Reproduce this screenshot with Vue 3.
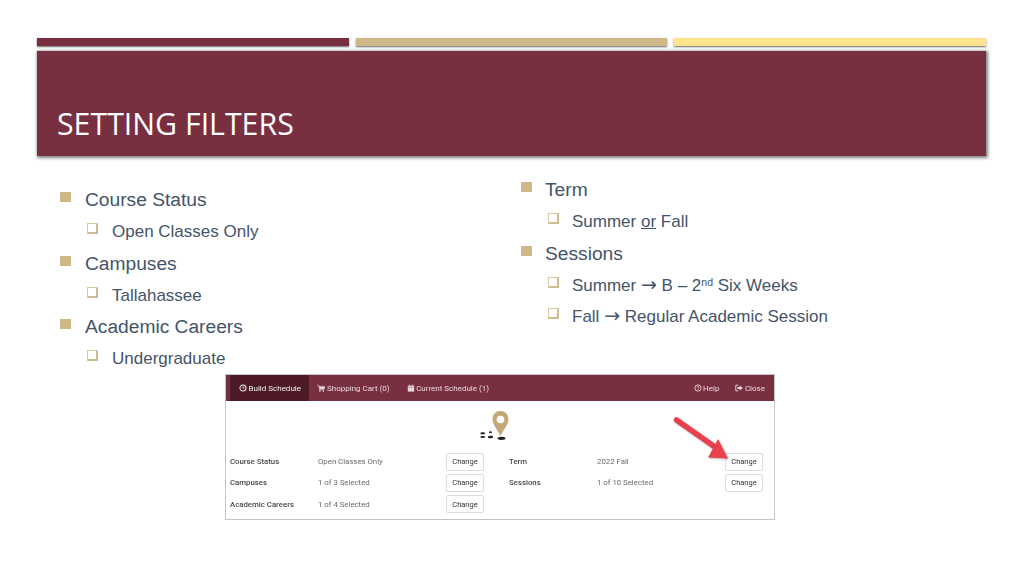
<script setup>
const left = [
  { head: 'Course Status', subs: ['Open Classes Only'] },
  { head: 'Campuses', subs: ['Tallahassee'] },
  { head: 'Academic Careers', subs: ['Undergraduate'] },
]
const rowsLeft = [
  ['Course Status', 'Open Classes Only'],
  ['Campuses', '1 of 3 Selected'],
  ['Academic Careers', '1 of 4 Selected'],
]
const rowsRight = [
  ['Term', '2022 Fall'],
  ['Sessions', '1 of 10 Selected'],
]
</script>

<template>
  <div class="slide">
    <div class="bars">
      <div class="bar maroon"></div>
      <div class="bar tan"></div>
      <div class="bar yellow"></div>
    </div>
    <header class="title"><h1>SETTING FILTERS</h1></header>

    <div class="columns">
      <div class="col col-left">
        <template v-for="g in left" :key="g.head">
          <div class="l1"><span class="sq"></span>{{ g.head }}</div>
          <div class="l2" v-for="s in g.subs" :key="s"><span class="box"></span>{{ s }}</div>
        </template>
      </div>
      <div class="col col-right">
        <div class="l1"><span class="sq"></span>Term</div>
        <div class="l2"><span class="box"></span>Summer&nbsp;<u>or</u>&nbsp;Fall</div>
        <div class="l1"><span class="sq"></span>Sessions</div>
        <div class="l2"><span class="box"></span><span>Summer <span class="to">→</span> B – 2<sup>nd</sup> Six Weeks</span></div>
        <div class="l2"><span class="box"></span><span>Fall <span class="to">→</span> Regular Academic Session</span></div>
      </div>
    </div>

    <div class="shot">
      <nav class="nav">
        <div class="tab active">
          <svg viewBox="0 0 10 10" class="ic"><circle cx="5" cy="5" r="3.8" fill="none" stroke="currentColor" stroke-width="1.3"/><path d="M5 2.800V5.200H7" fill="none" stroke="currentColor" stroke-width="1"/></svg>
          Build Schedule
        </div>
        <div class="tab">
          <svg viewBox="0 0 10 10" class="ic"><path d="M0 1.500H2L2.500 3H10L9 6.500H3L2 1.500ZM3 7.200H8.500" fill="currentColor" stroke="currentColor" stroke-width=".5"/><circle cx="3.600" cy="8.600" r="1" fill="currentColor"/><circle cx="8" cy="8.600" r="1" fill="currentColor"/></svg>
          Shopping Cart (0)
        </div>
        <div class="tab">
          <svg viewBox="0 0 10 10" class="ic"><path d="M1 2H9V9.500H1Z" fill="currentColor"/><path d="M3 .8V2.600M7 .8V2.600" stroke="currentColor" stroke-width="1"/><path d="M1.500 4H8.500" stroke="#782f40" stroke-width=".5"/></svg>
          Current Schedule (1)
        </div>
        <div class="spacer"></div>
        <div class="tab side">
          <svg viewBox="0 0 10 10" class="ic"><circle cx="5" cy="5" r="3.900" fill="none" stroke="currentColor" stroke-width="1.100"/><path d="M3.700 4C3.800 2.700 6.300 2.700 6.300 4C6.300 5 5 4.900 5 6" fill="none" stroke="currentColor" stroke-width=".9"/><circle cx="5" cy="7.200" r=".6" fill="currentColor"/></svg>
          Help
        </div>
        <div class="tab side last">
          <svg viewBox="0 0 10 10" class="ic"><path d="M4 1.500H1V8.500H4" fill="none" stroke="currentColor" stroke-width="1.200"/><path d="M3 3.700H6V1.800L9.800 5L6 8.200V6.300H3Z" fill="currentColor"/></svg>
          Close
        </div>
      </nav>

      <div class="pin-wrap">
        <svg viewBox="0 0 30 32" class="pin">
          <path d="M20.500 1C14.500 1 12.500 5.500 12.500 9.500C12.500 14 17.500 20 20.500 26C23.500 20 28.500 14 28.500 9.500C28.500 5.500 26.500 1 20.500 1Z" fill="#c4a87a"/>
          <circle cx="20.500" cy="9.500" r="3.800" fill="#fff"/>
          <ellipse cx="2.700" cy="23.300" rx="2.500" ry="1.100" fill="#222"/>
          <ellipse cx="2.700" cy="27" rx="2.500" ry="1" fill="#222"/>
          <ellipse cx="10.500" cy="22.300" rx="1.500" ry="1" fill="#222"/>
          <ellipse cx="10.500" cy="27" rx="2.700" ry="1.200" fill="#222"/>
          <ellipse cx="21.500" cy="28.300" rx="4" ry="1.600" fill="#222"/>
        </svg>
      </div>

      <div class="grid">
        <div class="rows">
          <div class="row" v-for="r in rowsLeft" :key="r[0]">
            <span class="k">{{ r[0] }}</span><span class="v">{{ r[1] }}</span><button class="btn">Change</button>
          </div>
        </div>
        <div class="rows">
          <div class="row" v-for="r in rowsRight" :key="r[0]">
            <span class="k">{{ r[0] }}</span><span class="v">{{ r[1] }}</span><button class="btn">Change</button>
          </div>
        </div>
      </div>

      <svg class="arrow" viewBox="0 0 60 44">
        <path d="M3.500 4L42 31" stroke="#e8404c" stroke-width="5.500" stroke-linecap="round" fill="none"/>
        <path d="M55 42.500L35 41.500L45 23Z" fill="#e8404c"/>
      </svg>
    </div>
  </div>
</template>

<style scoped>
.slide {
  width: 1024px;
  height: 575px;
  box-sizing: border-box;
  padding-top: 38px;
  background: #fff;
  overflow: hidden;
  font-family: "Liberation Sans", Arial, sans-serif;
}
.bars {
  display: flex;
  gap: 7px;
  margin: 0 38px 0 37px;
  height: 8px;
}
.bar { flex: 1; box-shadow: 0 1px 2px rgba(0, 0, 0, .6); }
.maroon { background: #782f40; }
.tan { background: #ceb888; }
.yellow { background: #ffe38f; }
.title {
  margin: 5px 38px 0 37px;
  height: 105px;
  box-sizing: border-box;
  background: #782f40;
  box-shadow: 1px 1px 3px 1px rgba(0, 0, 0, .5);
  padding: 55px 0 0 20px;
}
h1 {
  margin: 0;
  font-family: "Open Sans", "Noto Sans", sans-serif;
  font-weight: 400;
  font-size: 30.300px;
  line-height: 36px;
  color: #fff;
}
.columns { display: flex; height: 219px; }
.col { color: #44546a; }
.col-left { width: 461px; padding: 28px 0 0 60px; box-sizing: border-box; }
.col-right { padding: 18px 0 0 60px; }
.l1 {
  display: flex;
  align-items: flex-start;
  font-size: 19.200px;
  line-height: 32px;
  height: 32px;
}
.l2 {
  display: flex;
  align-items: flex-start;
  font-size: 17px;
  line-height: 31px;
  height: 31.500px;
  padding-left: 27px;
}
.sq {
  width: 11px;
  height: 10px;
  margin: 8px 13px 0 0;
  background: #ceb888;
  flex: none;
}
.col-left .sq { margin-right: 14px; }
.box {
  width: 8px;
  height: 8px;
  margin: 7px 13px 0 0;
  border: 1px solid #d8c9a6;
  border-right: 2px solid #cdbb94;
  border-bottom: 2px solid #cdbb94;
  flex: none;
  border-radius: 1px;
}
.col-left .box { margin-right: 14px; }
sup { font-size: 10.500px; line-height: 0; vertical-align: 5px; }
.to { font-family: "DejaVu Sans", sans-serif; font-size: 19px; line-height: 0; }
.shot {
  position: relative;
  box-sizing: border-box;
  width: 550px;
  height: 146px;
  margin-left: 225px;
  margin-top: -1px;
  border: 1px solid #c4c4c4;
  background: #fff;
  font-family: Roboto, "Liberation Sans", sans-serif;
  font-size: 8px;
  filter: blur(.3px);
}
.nav {
  display: flex;
  height: 26px;
  background: #782f40;
  color: #e8d8dc;
  font-size: 8px;
}
.tab {
  display: flex;
  align-items: center;
  gap: 1.500px;
  padding: 0 8.500px;
}
.active { background: #4f1a28; color: #eee; margin-left: 4px; padding: 0 8px 0 9px; }
.side { padding: 0 8px; }
.last { padding-right: 9px; }
.spacer { flex: 1; }
.ic { width: 8px; height: 8px; flex: none; }
.pin-wrap { display: flex; justify-content: center; padding: 9px 0 0; height: 33px; }
.pin { width: 30px; height: 32px; margin-right: 10px; }
.grid { display: flex; margin-top: 8px; }
.rows { width: 279px; padding-left: 4px; box-sizing: border-box; }
.rows:last-child { width: 269px; }
.row { display: flex; align-items: center; height: 21.300px; }
.k { width: 88px; font-weight: 500; color: #4a4a4a; font-size: 7.800px; }
.v { width: 128px; color: #6a6a6a; font-size: 7.800px; }
.btn {
  width: 38px;
  height: 18px;
  padding: 0;
  background: #fff;
  border: 1px solid #ddd;
  border-radius: 2px;
  color: #333;
  font: 7.500px Roboto, sans-serif;
}
.arrow {
  position: absolute;
  left: 447px;
  top: 41px;
  width: 60px;
  height: 44px;
  filter: drop-shadow(1px 1px 1px rgba(0, 0, 0, .3));
}
</style>
